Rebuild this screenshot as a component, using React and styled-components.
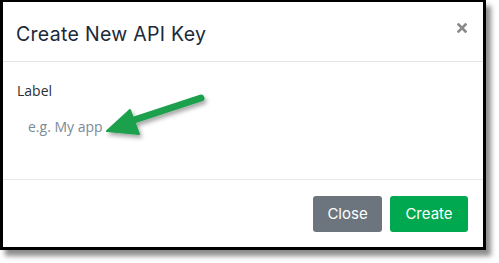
import React from 'react';
import styled, { createGlobalStyle } from 'styled-components';

const GlobalStyle = createGlobalStyle`
	html, body {
		margin: 0;
		padding: 0;
		background: #ffffff;
	}
`;

const App = () => {
	return (
		<>
			<GlobalStyle />
			<Page>
				<Modal>
					<Header>
						<Title>Create New API Key</Title>
						<CloseIcon aria-label="close">
							<svg width="10" height="10" viewBox="0 0 10 10">
								<path d="M1.5 1.5 L8.5 8.5 M8.5 1.5 L1.5 8.5" stroke="#8a8a8a" strokeWidth="2.6" strokeLinecap="square" />
							</svg>
						</CloseIcon>
					</Header>
					<Body>
						<FieldLabel htmlFor="label">Label</FieldLabel>
						<TextInput id="label" placeholder="e.g. My app" />
					</Body>
					<Footer>
						<Button variant="secondary">Close</Button>
						<Button variant="primary">Create</Button>
					</Footer>
					<Arrow width="486" height="250" viewBox="0 0 486 250">
						<defs>
							<filter id="arrowShadow" x="-20%" y="-50%" width="140%" height="200%">
								<feDropShadow dx="2" dy="3" stdDeviation="2" floodColor="#000" floodOpacity="0.35" />
							</filter>
						</defs>
						<g filter="url(#arrowShadow)" fill="#1ba04c" stroke="#1ba04c">
							<line x1="201" y1="98" x2="131" y2="121" strokeWidth="7" strokeLinecap="round" />
							<polygon points="107,131 139,134 130,110" strokeWidth="2" strokeLinejoin="round" />
						</g>
					</Arrow>
				</Modal>
			</Page>
		</>
	);
};

const Page = styled.div`
	width: 499px;
	height: 263px;
	padding: 0;
	box-sizing: border-box;
`;

const Modal = styled.div`
	position: relative;
	width: 486px;
	height: 250px;
	box-sizing: border-box;
	border: 3px solid #000000;
	border-top-width: 2px;
	background: #ffffff;
	box-shadow: 5px 6px 5px rgba(0, 0, 0, 0.45);
	display: flex;
	flex-direction: column;
`;

const Header = styled.div`
	height: 59px;
	display: flex;
	align-items: center;
	justify-content: space-between;
	padding: 0 16px 0 13px;
	border-bottom: 1px solid #e1e6ea;
`;

const Title = styled.h5`
	margin: 0;
	padding-top: 4px;
	font-family: Inter, "Open Sans", sans-serif;
	font-size: 19.5px;
	font-weight: 400;
	color: #1a2a3a;
	letter-spacing: 0.3px;
`;

const CloseIcon = styled.span`
	display: flex;
	margin-top: -8px;
	cursor: pointer;
`;

const Body = styled.div`
	height: 118px;
	padding: 19px 14px 0;
	display: flex;
	flex-direction: column;
	border-bottom: 1px solid #e6e8ea;
	box-sizing: border-box;
`;

const FieldLabel = styled.label`
	font-family: "Open Sans", sans-serif;
	font-size: 14px;
	color: #2b2f33;
	line-height: 20px;
`;

const TextInput = styled.input`
	margin-top: 16px;
	border: none;
	outline: none;
	padding: 0 11px;
	font-family: "Open Sans", sans-serif;
	font-size: 14px;
	line-height: 20px;
	color: #333;

	&::placeholder {
		color: #7b8a97;
	}
`;

const Footer = styled.div`
	flex: 1;
	display: flex;
	align-items: center;
	justify-content: flex-end;
	gap: 8px;
	padding: 0 15px 0 0;
`;

const Button = styled.button`
	height: 36px;
	padding: 0 12px;
	border: none;
	border-radius: 3px;
	font-family: Inter, "Open Sans", sans-serif;
	font-size: 15px;
	color: #ffffff;
	cursor: pointer;
	background: ${props => (props.variant === 'primary' ? '#00a84f' : '#6c757d')};
	min-width: ${props => (props.variant === 'primary' ? '78px' : '69px')};
`;

const Arrow = styled.svg`
	position: absolute;
	left: -3px;
	top: -2px;
	pointer-events: none;
	overflow: visible;
`;

export default App;
